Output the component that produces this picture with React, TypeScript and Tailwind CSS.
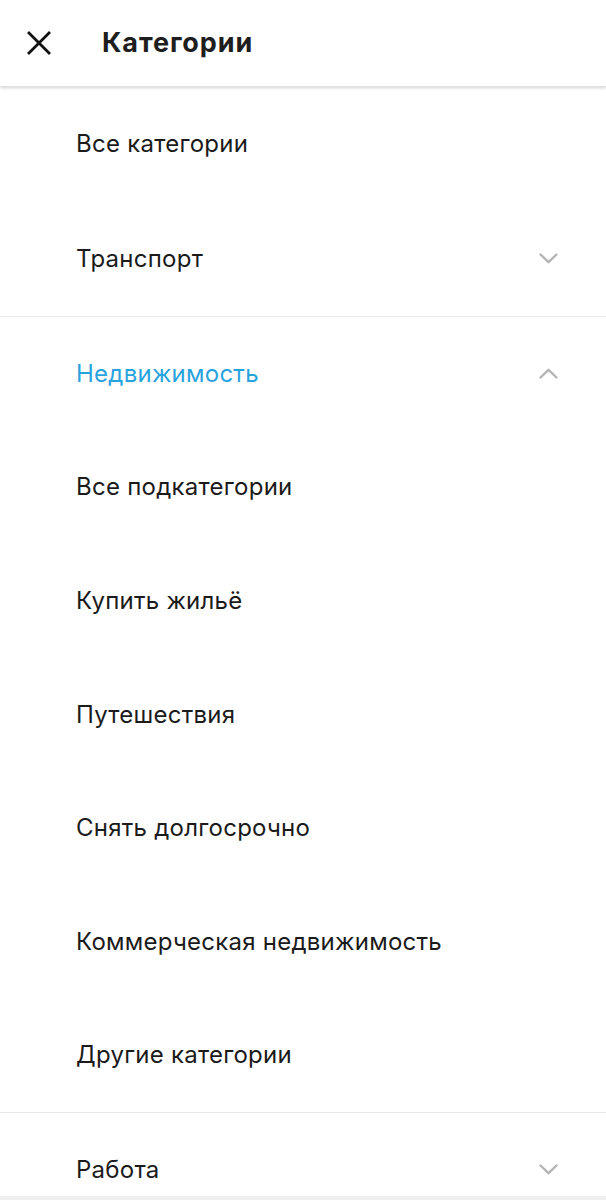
import React from "react";

const Chevron = ({ up }: { up?: boolean }) => (
  <svg width="19" height="11" viewBox="0 0 19 11" fill="none" className="mr-[48px]">
    {up ? (
      <path d="M1.5 9.5 L9.5 1.8 L17.5 9.5" stroke="#b4b4b4" strokeWidth="2.4" strokeLinecap="round" strokeLinejoin="round" />
    ) : (
      <path d="M1.5 1.5 L9.5 9.2 L17.5 1.5" stroke="#b4b4b4" strokeWidth="2.4" strokeLinecap="round" strokeLinejoin="round" />
    )}
  </svg>
);

const Row = ({ label, chevron, blue, tall }: { label: string; chevron?: "up" | "down"; blue?: boolean; tall?: boolean }) => (
  <div className={`${tall ? "h-[114.5px]" : "h-[113.6px]"} shrink-0 flex items-center justify-between pl-[76px]`}>
    <span className={`text-[24px] tracking-[0.25px] ${blue ? "text-[#29a3de]" : "text-[#1b1b1b]"}`}>{label}</span>
    {chevron && <Chevron up={chevron === "up"} />}
  </div>
);

export default function App() {
  return (
    <div className="w-[606px] h-[1200px] bg-white overflow-hidden flex flex-col relative" style={{ fontFamily: "Inter, 'Noto Sans', sans-serif" }}>
      <div className="h-[87px] flex items-center shrink-0 shadow-[0_1px_3px_rgba(0,0,0,0.18)] relative z-10 border-b border-[#e2e2e2]">
        <svg width="24" height="24" viewBox="0 0 24 24" className="ml-[27px]">
          <path d="M2 2 L22 22 M22 2 L2 22" stroke="#111" strokeWidth="2.8" strokeLinecap="square" />
        </svg>
        <span className="ml-[51px] text-[27px] font-bold text-[#1e1e1e] tracking-[0.9px]">Категории</span>
      </div>
      <Row label="Все категории" tall />
      <Row label="Транспорт" chevron="down" tall />
      <div className="h-px bg-[#e8e8e8] shrink-0" />
      <Row label="Недвижимость" chevron="up" blue />
      <Row label="Все подкатегории" />
      <Row label="Купить жильё" />
      <Row label="Путешествия" />
      <Row label="Снять долгосрочно" />
      <Row label="Коммерческая недвижимость" />
      <Row label="Другие категории" />
      <div className="h-px bg-[#e8e8e8] shrink-0" />
      <Row label="Работа" chevron="down" />
      <div className="absolute left-0 right-0 bottom-0 h-[4px] bg-[#efefef]" />
    </div>
  );
}
